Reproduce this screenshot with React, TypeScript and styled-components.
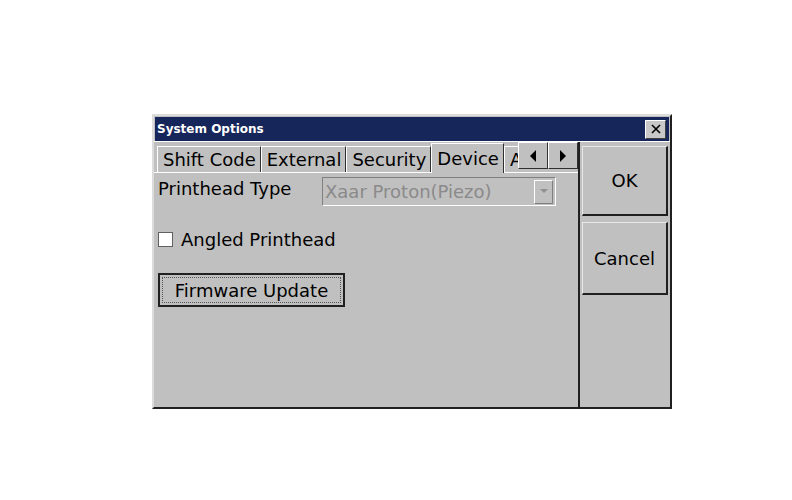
import React from 'react';
import styled, { createGlobalStyle } from 'styled-components';

const GlobalStyle = createGlobalStyle`
  body {
    margin: 0;
    background: #ffffff;
    font-family: "DejaVu Sans", sans-serif;
  }
`;

const Page = styled.div`
  padding: 114px 0 0 152px;
`;

const Window = styled.div`
  width: 516px;
  height: 291px;
  background: #c0c0c0;
  border: 2px solid;
  border-color: #dcdcdc #202020 #202020 #dcdcdc;
  display: flex;
  flex-direction: column;
`;

const TitleBar = styled.div`
  height: 24px;
  margin: 1px 1px 0 1px;
  background: #16255a;
  display: flex;
  align-items: center;
  justify-content: space-between;
  padding: 0 3px 0 2px;
`;

const Title = styled.span`
  color: #ffffff;
  font-size: 12px;
  font-weight: bold;
  font-family: "DejaVu Sans", sans-serif;
`;

const CloseBox = styled.div`
  width: 19px;
  height: 17px;
  background: #c8c8c8;
  border: 1px solid;
  border-color: #ffffff #404040 #404040 #ffffff;
  display: flex;
  align-items: center;
  justify-content: center;
`;

const Body = styled.div`
  flex: 1;
  display: flex;
  border-top: 1px solid #ffffff;
`;

const Left = styled.div`
  width: 424px;
  display: flex;
  flex-direction: column;
  border-right: 2px solid #202020;
`;

const TabRow = styled.div`
  height: 30px;
  display: flex;
  align-items: flex-end;
  padding-left: 3px;
`;

const Tab = styled.div<{ $active?: boolean }>`
  height: 26px;
  box-sizing: border-box;
  padding: 0 4px 0 5px;
  border: 1px solid;
  border-bottom: none;
  border-color: #ffffff #303030 transparent #ffffff;
  font-size: 18px;
  color: #000;
  display: flex;
  align-items: center;
  white-space: nowrap;
  background: #c0c0c0;
  flex-shrink: 0;
  ${(p) => (p.$active ? 'position: relative; z-index: 1; margin-bottom: -1px; height: 30px;' : '')}
`;

const Clip = styled.div`
  flex: 1;
  min-width: 0;
  overflow: hidden;
  display: flex;
  align-self: stretch;
  align-items: flex-end;
`;

const Scroller = styled.div`
  display: flex;
  align-self: flex-start;
  flex-shrink: 0;
`;

const ArrowBtn = styled.div`
  width: 28px;
  height: 25px;
  border: 1px solid;
  border-color: #ffffff #303030 #303030 #ffffff;
  display: flex;
  align-items: center;
  justify-content: center;
`;

const Panel = styled.div`
  flex: 1;
  border-top: 1px solid #ffffff;
  padding: 4px 6px 0 4px;
  display: flex;
  flex-direction: column;
`;

const FieldRow = styled.div`
  display: flex;
  align-items: flex-start;
  height: 33px;
`;

const Label = styled.span`
  font-size: 18px;
  width: 164px;
  line-height: 20px;
  padding-top: 2px;
`;

const Combo = styled.div`
  width: 234px;
  height: 29px;
  box-sizing: border-box;
  border: 1px solid;
  border-color: #808080 #ffffff #ffffff #808080;
  display: flex;
  align-items: center;
  justify-content: space-between;
  padding: 0 2px 0 2px;
  color: #8a8a8a;
  font-size: 18px;
`;

const ComboBtn = styled.div`
  width: 17px;
  height: 22px;
  border: 1px solid;
  border-color: #ffffff #808080 #808080 #ffffff;
  display: flex;
  align-items: center;
  justify-content: center;
`;

const CheckRow = styled.label`
  display: flex;
  align-items: center;
  gap: 8px;
  margin-top: 19px;
  font-size: 18px;
`;

const Box = styled.span`
  width: 13px;
  height: 13px;
  background: #ffffff;
  border: 1px solid #606060;
`;

const PushButton = styled.div`
  margin-top: 23px;
  align-self: flex-start;
  width: 187px;
  height: 34px;
  box-sizing: border-box;
  border: 2px solid #202020;
  padding: 2px;
  display: flex;
`;

const Focus = styled.div`
  flex: 1;
  border: 1px dotted #555555;
  display: flex;
  align-items: center;
  justify-content: center;
  font-size: 18px;
`;

const Side = styled.div`
  flex: 1;
  display: flex;
  flex-direction: column;
  padding: 4px 2px 0 2px;
  gap: 6px;
`;

const SideButton = styled.div<{ $h: number }>`
  height: ${(p) => p.$h}px;
  box-sizing: border-box;
  border: 1px solid;
  border-color: #e8e8e8 #202020 #202020 #e8e8e8;
  border-bottom-width: 2px;
  border-right-width: 2px;
  display: flex;
  align-items: center;
  justify-content: center;
  font-size: 18px;
`;

function Arrow({ dir }: { dir: 'left' | 'right' }) {
  return (
    <svg width="8" height="12" viewBox="0 0 8 12">
      {dir === 'left' ? <polygon points="7,0 7,12 1,6" fill="#000" /> : <polygon points="1,0 1,12 7,6" fill="#000" />}
    </svg>
  );
}

export default function App() {
  return (
    <Page>
      <GlobalStyle />
      <Window>
        <TitleBar>
          <Title>System Options</Title>
          <CloseBox>
            <svg width="10" height="10" viewBox="0 0 10 10">
              <path d="M1 1 L9 9 M9 1 L1 9" stroke="#000" strokeWidth="1.6" />
            </svg>
          </CloseBox>
        </TitleBar>
        <Body>
          <Left>
            <TabRow>
              <Tab>Shift Code</Tab>
              <Tab>External</Tab>
              <Tab>Security</Tab>
              <Tab $active>Device</Tab>
              <Clip>
                <Tab>Advanced</Tab>
              </Clip>
              <Scroller>
                <ArrowBtn>
                  <Arrow dir="left" />
                </ArrowBtn>
                <ArrowBtn>
                  <Arrow dir="right" />
                </ArrowBtn>
              </Scroller>
            </TabRow>
            <Panel>
              <FieldRow>
                <Label>Printhead Type</Label>
                <Combo>
                  <span>Xaar Proton(Piezo)</span>
                  <ComboBtn>
                    <svg width="8" height="5" viewBox="0 0 8 5">
                      <polygon points="0,0 8,0 4,4" fill="#909090" />
                    </svg>
                  </ComboBtn>
                </Combo>
              </FieldRow>
              <CheckRow>
                <Box />
                Angled Printhead
              </CheckRow>
              <PushButton>
                <Focus>Firmware Update</Focus>
              </PushButton>
            </Panel>
          </Left>
          <Side>
            <SideButton $h={70}>OK</SideButton>
            <SideButton $h={73}>Cancel</SideButton>
          </Side>
        </Body>
      </Window>
    </Page>
  );
}
